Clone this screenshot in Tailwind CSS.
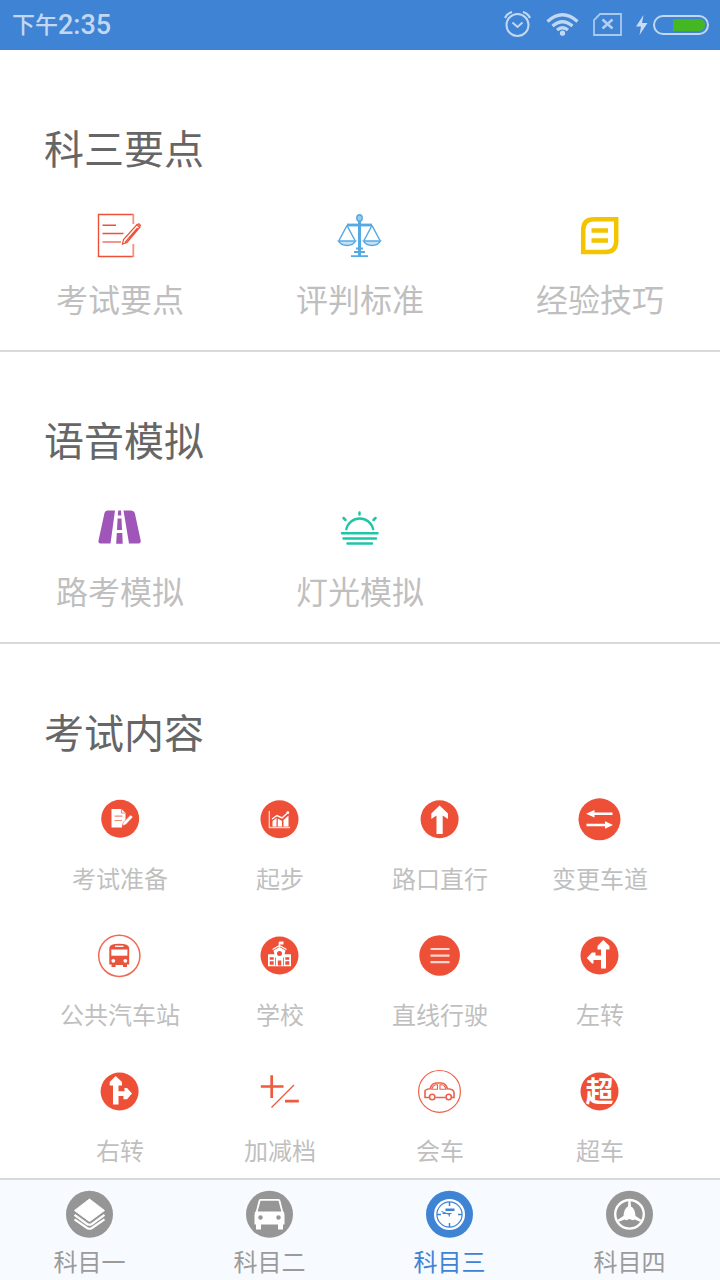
<!DOCTYPE html>
<html lang="zh-CN">
<head>
<meta charset="utf-8">
<title>科目三</title>
<script src="https://cdn.jsdelivr.net/npm/@tailwindcss/browser@4"></script>
</head>
<body class="w-[720px] h-[1280px] overflow-hidden bg-white flex flex-col font-['Noto_Sans_CJK_SC',sans-serif]">
<header class="h-[50px] shrink-0 bg-[#3f83d4] flex items-center justify-between pl-3 text-[#c2d8f2]">
  <div class="flex items-center leading-none font-medium"><span class="text-[23px] pb-[3px]">下午</span><span class="font-[Roboto,sans-serif] text-[27px] pt-px">2:35</span></div>
  <svg class="w-[220px] h-[50px]" viewBox="500 0 220 50" fill="none" stroke="#c2d8f2">
    <circle cx="517.500" cy="25" r="11" stroke-width="2"/>
    <path d="M512.500 22.500l5 4.500 5-4.500" stroke-width="2"/>
    <path d="M505 18q2-4.500 7-6M530 18q-2-4.500-7-6" stroke-width="2.200"/>
    <path d="M547.500 21.500Q562.500 8 577.500 21.500M552.500 26Q562.500 17.500 572.500 26M557 30Q562.500 25.500 568 30" stroke-width="3.200"/>
    <circle cx="562.500" cy="33.200" r="2.600" fill="#c2d8f2" stroke="none"/>
    <path d="M600 14H621V35H594V20Z" stroke="#a9c9ee" stroke-width="1.800"/>
    <path d="M602.500 19.500l10 9M612.500 19.500l-10 9" stroke="#b3cff0" stroke-width="2.600"/>
    <path d="M643.500 15L636 26.500H641L639.500 35L647.500 23H642Z" fill="#c9dcf4" stroke="none"/>
    <rect x="654" y="16" width="54" height="18" rx="9" stroke-width="2"/>
    <path d="M673 19H699Q705 19.500 705 25T699 31H673Z" fill="#45b722" stroke="none"/>
  </svg>
</header>

<main class="flex-1 min-h-0 overflow-hidden pt-[10px]">
  <section class="h-[292px] border-b-2 border-[#d9d9d9] pt-[67px]">
    <h2 class="pl-[44px] text-[40px] leading-[40px] text-[#666]">科三要点</h2>
    <div class="mt-[45px] grid grid-cols-3 text-[32px] leading-[32px] text-[#bfbfbf]">
      <div class="flex flex-col items-center gap-[22px]">
        <svg class="size-12" viewBox="96 212 48 48" fill="none" stroke="#ec5038">
          <path d="M133.300 214.500H98.500V256.500H133.300" stroke-width="1.400"/>
          <path d="M133.300 214V224M133.300 244V257" stroke="#f4907f" stroke-width="1.800"/>
          <path d="M102.500 225.300H116M102.500 233.500H123.500" stroke-width="1.500"/>
          <path d="M102.500 242H121" stroke="#f3978a" stroke-width="2"/>
          <path d="M122.500 244L123.500 239.500L137 224.500L140 227L127 242.500ZM125 242.500L137.500 228" stroke-width="1.200"/>
          <path d="M136.500 225Q139 222 140.700 225L139.500 227.500Z" fill="#f17461" stroke-width=".8"/>
        </svg>
        <span>考试要点</span>
      </div>
      <div class="flex flex-col items-center gap-[22px]">
        <svg class="size-12" viewBox="336 212 48 48" fill="none" stroke="#55aae4">
          <ellipse cx="359.500" cy="218" rx="2.700" ry="3.200" fill="#9ccbee" stroke-width="1.400"/>
          <path d="M359.500 221V256" stroke-width="3"/>
          <path d="M347 225H372" stroke-width="2.800"/>
          <path d="M347 225.500L339 240.500M347 225.500L355 240.500M372 225.500L364 240.500M372 225.500L380 240.500" stroke-width="1.500"/>
          <path d="M338.500 241H355.500Q353 245.500 347 245.500T338.500 241ZM363.500 241H380.500Q378 245.500 372 245.500T363.500 241Z" fill="#c4e0f5" stroke-width="1.500"/>
          <path d="M356 248.500H363M354 252H365M351 256.200H368" stroke-width="1.800"/>
        </svg>
        <span>评判标准</span>
      </div>
      <div class="flex flex-col items-center gap-[22px]">
        <svg class="size-12" viewBox="576 212 48 48" fill="none" stroke="#f2c500">
          <path d="M583.200 252V230Q583.200 219.200 594 219.200H616.200V241Q616.200 252 605.400 252Z" stroke-width="4.500"/>
          <path d="M591.500 230.500H608M591.500 240.500H608" stroke-width="4.600"/>
        </svg>
        <span>经验技巧</span>
      </div>
    </div>
  </section>

  <section class="h-[292px] border-b-2 border-[#d9d9d9] pt-[67px]">
    <h2 class="pl-[44px] text-[40px] leading-[40px] text-[#666]">语音模拟</h2>
    <div class="mt-[45px] grid grid-cols-3 text-[32px] leading-[32px] text-[#bfbfbf]">
      <div class="flex flex-col items-center gap-[22px]">
        <svg class="size-12" viewBox="96 504 48 48" fill="#9f56b8">
          <path d="M107.500 510.500H115L110.500 543.500H100.500Q98 543.500 98.500 540.500L104.500 513Q105 510.500 107.500 510.500ZM123.500 510.500H131Q134 510.500 134.800 513L140.700 540.500Q141 543.500 138.500 543.500H129ZM118.200 510.500H121L121.300 515.500H117.800ZM117.600 518.500H121.500L122 530H117ZM116.800 533H122.300L122.700 543.800H116.200Z"/>
        </svg>
        <span>路考模拟</span>
      </div>
      <div class="flex flex-col items-center gap-[22px]">
        <svg class="size-12" viewBox="336 504 48 48" fill="none" stroke="#1fc6a5" stroke-linecap="round">
          <path d="M346.300 529.200A13.800 13.800 0 0 1 373.200 529.200" stroke-width="2.300"/>
          <path d="M359.500 512.500V514.500M343.500 518L345.500 520M375.500 518L373.500 520" stroke-width="2.500"/>
          <path d="M342 533.300H377.500M343.500 538.500H376M347.500 543.500H372" stroke-width="2.500"/>
        </svg>
        <span>灯光模拟</span>
      </div>
    </div>
  </section>

  <section class="pt-[67px]">
    <h2 class="pl-[44px] text-[40px] leading-[40px] text-[#666]">考试内容</h2>
    <div class="mt-[44px] px-10 grid grid-cols-4 gap-y-[41px] text-[24px] leading-[24px] text-[#bfbfbf]">
      <div class="flex flex-col items-center gap-[23px]">
        <svg class="size-12" viewBox="96 795 48 48">
          <circle cx="120.200" cy="818.700" r="19" fill="#ee5037"/>
          <path d="M111.500 809H121.500L125.500 813V821L122 825V827.500H111.500Z" fill="#fff"/>
          <path d="M121.500 809V813H125.500M114.500 816.200H122.500M114.500 820.500H122" fill="none" stroke="#f28d7c" stroke-width="1.200"/>
          <path d="M122 826L123.500 822L130.500 815L133 817L126 824.500Z" fill="#fff" stroke="#ee5037" stroke-width=".5"/>
        </svg>
        <span>考试准备</span>
      </div>
      <div class="flex flex-col items-center gap-[23px]">
        <svg class="size-12" viewBox="256 795 48 48">
          <circle cx="279.500" cy="819.300" r="19" fill="#ee5037"/>
          <path d="M269.300 811V827.500H290" fill="none" stroke="#fbd0c8" stroke-width="1.300"/>
          <path d="M272.500 826.500V821L276.500 818V826.500ZM277.800 826.500V818.500L282 821V826.500ZM283.500 826.500V820L288.500 815.500V826.500Z" fill="#fff"/>
          <path d="M272 819L277 815.500L282 818L288 812.500" fill="none" stroke="#fff" stroke-width="1.400"/>
          <circle cx="287.800" cy="812.700" r="1.400" fill="#fff"/>
        </svg>
        <span>起步</span>
      </div>
      <div class="flex flex-col items-center gap-[23px]">
        <svg class="size-12" viewBox="416 795 48 48">
          <circle cx="439.600" cy="819.300" r="19" fill="#ee5037"/>
          <path d="M439.600 805.500L448 813.500V819L442.700 815.500V834H436.500V815.500L431.300 819V813.500Z" fill="#fff"/>
        </svg>
        <span>路口直行</span>
      </div>
      <div class="flex flex-col items-center gap-[23px]">
        <svg class="size-12" viewBox="576 795 48 48">
          <circle cx="599.500" cy="819.300" r="21" fill="#ee5037"/>
          <path d="M592 813.800H612.500M586.500 825H607" stroke="#fff" stroke-width="2.600"/>
          <path d="M586 813.800L594.500 810V817.600ZM613 825L605 821.200V828.800Z" fill="#fff"/>
        </svg>
        <span>变更车道</span>
      </div>

      <div class="flex flex-col items-center gap-[23px]">
        <svg class="size-12" viewBox="96 931 48 48">
          <circle cx="119.300" cy="955.800" r="20.600" fill="#fff" stroke="#ef6a55" stroke-width="1.500"/>
          <path d="M109.300 948Q109.300 943.700 119.200 943.700T129.200 948V964.500H127V967H123V965H115.500V967H111.500V964.500H109.300Z" fill="#e9543e"/>
          <path d="M111.300 949.500H127.400V955.700H111.300Z" fill="#fff"/>
          <path d="M115 946.300H123.500" stroke="#fff" stroke-width="1.300"/>
          <circle cx="113.300" cy="960.800" r="1.900" fill="#fff"/><circle cx="125.300" cy="960.800" r="1.900" fill="#fff"/>
        </svg>
        <span>公共汽车站</span>
      </div>
      <div class="flex flex-col items-center gap-[23px]">
        <svg class="size-12" viewBox="256 931 48 48">
          <circle cx="279.500" cy="955.500" r="19" fill="#ee5037"/>
          <path d="M268 954.300H274.500L273.500 950.500L279.500 947L285.500 950.500L284.500 954.300H291V966.300H268Z" fill="#fff"/>
          <path d="M272.500 949.500L279.500 945.500L286.500 949.500M279.300 947V942" fill="none" stroke="#fff" stroke-width="1.200"/>
          <path d="M279.300 941.500H283.500V944.500H279.300Z" fill="#fff"/>
          <circle cx="279.500" cy="953.500" r="2.500" fill="#ee5037"/>
          <path d="M269.700 957.200H273.700V959.700H269.700ZM269.700 961.200H273.700V964.700H269.700ZM285.300 957.200H289.300V959.700H285.300ZM285.300 961.200H289.300V964.700H285.300ZM277.800 960.500H281.300V965.500H277.800ZM275.200 957.500H276V965.500H275.200ZM283 957.500H283.800V965.500H283Z" fill="#ee5037"/>
        </svg>
        <span>学校</span>
      </div>
      <div class="flex flex-col items-center gap-[23px]">
        <svg class="size-12" viewBox="416 931 48 48">
          <circle cx="439.600" cy="955.500" r="20.300" fill="#ee5037"/>
          <path d="M430.500 949H449.500M430.500 955.700H449.500M430.500 962.200H449.500" stroke="#fcd5ce" stroke-width="2.200"/>
        </svg>
        <span>直线行驶</span>
      </div>
      <div class="flex flex-col items-center gap-[23px]">
        <svg class="size-12" viewBox="576 931 48 48">
          <circle cx="599.500" cy="955.500" r="19" fill="#ee5037"/>
          <path d="M603.300 940L609.500 946V949.500H606V968.500H601V960H593.500V963.500H592L586.800 958L592 952.500H595.500V955.500H601V949.500H597.500V946Z" fill="#fff"/>
        </svg>
        <span>左转</span>
      </div>

      <div class="flex flex-col items-center gap-[23px]">
        <svg class="size-12" viewBox="96 1067 48 48">
          <circle cx="119.600" cy="1091.500" r="19" fill="#ee5037"/>
          <path d="M115.700 1076L122 1082V1085.500H118.500V1091.200H124.500V1088H127L132 1093.500L127 1099.200H123.500V1096H118.500V1104.500H113V1085.500H109.700V1082Z" fill="#fff"/>
        </svg>
        <span>右转</span>
      </div>
      <div class="flex flex-col items-center gap-[23px]">
        <svg class="size-12" viewBox="256 1067 48 48" fill="none" stroke="#ee5940">
          <path d="M260.800 1086.500H283.500M271.700 1075.300V1098M285 1101.200H298.800" stroke-width="2.700"/>
          <path d="M271.500 1107.500L294 1085" stroke-width="1.300"/>
        </svg>
        <span>加减档</span>
      </div>
      <div class="flex flex-col items-center gap-[23px]">
        <svg class="size-12" viewBox="416 1067 48 48" fill="none" stroke="#ef604a">
          <circle cx="439.500" cy="1091.400" r="20.900" stroke-width="1.200"/>
          <path d="M429 1097.500H425V1091Q425 1089.500 430 1088.800Q432 1083 436 1083H441.500Q445.500 1083 447.500 1088.800Q454 1089 454 1093V1097.500H452M435.500 1097.500H445.500" stroke-width="1.600"/>
          <path d="M431 1089.300H437.500V1084.800H435.500Q433 1085.300 431.800 1089ZM440 1089.300H446Q444.500 1085 442 1084.800H440Z" stroke-width="1.100"/>
          <circle cx="432.200" cy="1097" r="2.700" stroke-width="1.600"/><circle cx="448.700" cy="1097" r="2.700" stroke-width="1.600"/>
        </svg>
        <span>会车</span>
      </div>
      <div class="flex flex-col items-center gap-[23px]">
        <svg class="size-12" viewBox="576 1067 48 48">
          <circle cx="599.500" cy="1091.500" r="19" fill="#ee5037"/>
          <text x="599.500" y="1102" text-anchor="middle" font-size="28" font-weight="700" fill="#fff">超</text>
        </svg>
        <span>超车</span>
      </div>
    </div>
  </section>
</main>

<nav class="h-[102px] shrink-0 border-t-2 border-[#d9d9d9] bg-[#f7faff] grid grid-cols-4 pt-[10px] text-[24px] leading-[24px] text-[#9b9b9b]">
  <div class="flex flex-col items-center gap-[11px] pr-px">
    <svg class="size-12" viewBox="66.500 1190 48 48">
      <circle cx="90" cy="1214.300" r="23.500" fill="#969696"/>
      <path d="M90 1199L105 1210.500L90 1221.500L75 1210.500Z" fill="#fff" stroke="#fff" stroke-linejoin="round"/>
      <path d="M75 1214.800L87.500 1224Q90 1225.500 92.500 1224L105 1214.800M75 1219.300L87.500 1228Q90 1229.500 92.500 1228L105 1219.300" fill="none" stroke="#fff" stroke-width="2.200"/>
    </svg>
    <span>科目一</span>
  </div>
  <div class="flex flex-col items-center gap-[11px] pr-px">
    <svg class="size-12" viewBox="246.500 1190 48 48">
      <circle cx="270" cy="1214.300" r="23.500" fill="#969696"/>
      <path d="M261 1199H279Q280.500 1199 281 1201L283.500 1211Q285 1212 285 1215V1224.500H283.500V1229.500H278.500V1224.500H261.500V1229.500H256.500V1224.500H255V1215Q255 1212 256.500 1211L259 1201Q259.500 1199 261 1199Z" fill="#fff"/>
      <path d="M261 1200.800H279L281.800 1211.500H258.200Z" fill="#969696"/>
      <circle cx="261" cy="1217.500" r="2.200" fill="#969696"/><circle cx="279" cy="1217.500" r="2.200" fill="#969696"/>
    </svg>
    <span>科目二</span>
  </div>
  <div class="flex flex-col items-center gap-[11px] pr-px text-[#3f83d4]">
    <svg class="size-12" viewBox="426.500 1190 48 48" fill="none" stroke="#3f83d4">
      <circle cx="450" cy="1214.300" r="23.500" fill="#3f83d4" stroke="none"/>
      <circle cx="450" cy="1214.500" r="15.500" fill="#fff" stroke="none"/>
      <circle cx="450" cy="1214.500" r="12.600" stroke-width="1.200"/>
      <path d="M450 1202V1206M450 1223V1227M437.500 1214.500H441.500M458.500 1214.500H462.500" stroke-width="1.500"/>
      <path d="M446 1209.800H455" stroke-width="2.600"/>
      <path d="M442 1211.500L450 1214.500L449.500 1216.500M443 1213.500H452" stroke-width="1.100"/>
    </svg>
    <span>科目三</span>
  </div>
  <div class="flex flex-col items-center gap-[11px] pr-px">
    <svg class="size-12" viewBox="606.500 1190 48 48">
      <circle cx="630" cy="1214.300" r="23.500" fill="#969696"/>
      <circle cx="630" cy="1214.300" r="14.300" fill="none" stroke="#fff" stroke-width="2.400"/>
      <path d="M628.900 1201H631.100L631.500 1206.500Q635.500 1208.500 636 1216L641.800 1219.800L640.700 1221.700L635 1219.600Q632.500 1221 631.500 1219.500Q630 1218.300 628.500 1219.500Q627.500 1221 625 1219.600L619.300 1221.700L618.200 1219.800L624 1216Q624.500 1208.500 628.500 1206.500Z" fill="#fff"/>
    </svg>
    <span>科目四</span>
  </div>
</nav>
</body>
</html>
